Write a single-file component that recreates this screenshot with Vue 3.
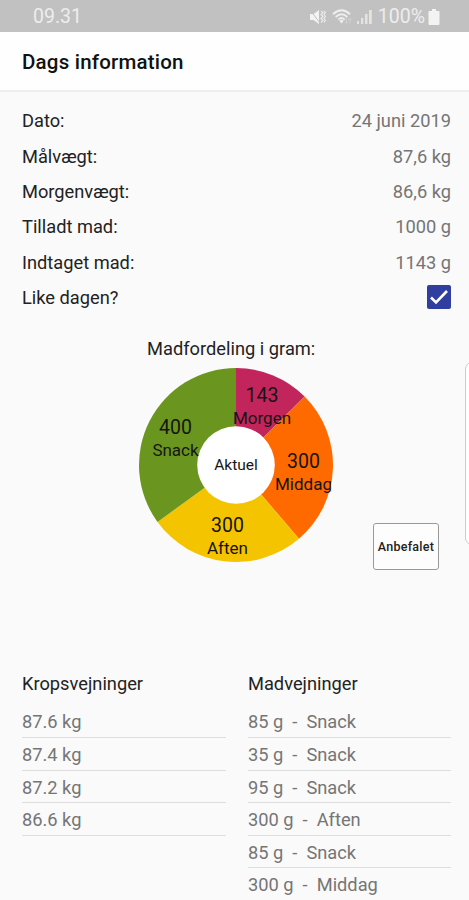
<script setup>
const info = [
  { label: 'Dato:', value: '24 juni 2019' },
  { label: 'Målvægt:', value: '87,6 kg' },
  { label: 'Morgenvægt:', value: '86,6 kg' },
  { label: 'Tilladt mad:', value: '1000 g' },
  { label: 'Indtaget mad:', value: '1143 g' },
]

const meals = [
  { name: 'Morgen', grams: 143, color: '#c2255c', x: 123, y: 34, ny: 56 },
  { name: 'Middag', grams: 300, color: '#ff6a00', x: 164.5, y: 99.5, ny: 121.5 },
  { name: 'Aften', grams: 300, color: '#f5c400', x: 88.5, y: 164, ny: 186 },
  { name: 'Snack', grams: 400, color: '#6a961f', x: 36.5, y: 66, ny: 88 },
]
const R = 97
const total = meals.reduce((sum, m) => sum + m.grams, 0)
const point = (g) => {
  const a = (g / total) * Math.PI * 2
  return `${(R + R * Math.sin(a)).toFixed(2)} ${(R - R * Math.cos(a)).toFixed(2)}`
}
let start = 0
const slices = meals.map((m) => {
  const d = `M${R} ${R}L${point(start)}A${R} ${R} 0 0 1 ${point(start + m.grams)}Z`
  start += m.grams
  return { ...m, d }
})

const body = ['87.6 kg', '87.4 kg', '87.2 kg', '86.6 kg']
const food = [
  '85 g  -  Snack',
  '35 g  -  Snack',
  '95 g  -  Snack',
  '300 g  -  Aften',
  '85 g  -  Snack',
  '300 g  -  Middag',
]
</script>

<template>
  <div class="screen">
    <header class="status">
      <span class="clock">09.31</span>
      <svg class="mute" width="17" height="16" viewBox="0 0 17 16">
        <path d="M1 5h3.500L10 1v14L4.500 11H1z" fill="#f3f3f3" />
        <path d="M1 1l10 13" stroke="#c1c1c1" stroke-width="1" />
        <path d="M12 2l2 1.500-2 2 2 2-2 2 2 2-2 2M15 2l1.500 1.500-1.500 2 1.500 2-1.500 2 1.500 2-1.500 2" fill="none" stroke="#ebebeb" stroke-width="1.200" />
      </svg>
      <svg class="wifi" width="21" height="16" viewBox="0 0 21 16">
        <g fill="none" stroke="#eeeeee" stroke-width="1.900">
          <path d="M1 5.200Q9.500-2.500 18 5.200" />
          <path d="M3.700 8Q9.500 2.500 15.300 8" />
          <path d="M6.300 10.600Q9.500 7.500 12.700 10.600" />
        </g>
        <path d="M7.200 11.700Q9.500 10 11.800 11.700L9.500 14.500z" fill="#eeeeee" />
        <path d="M14.500 9v5M13 12.500l1.500 2 1.500-2M18 14.500v-5M16.500 11l1.500-2 1.500 2" fill="none" stroke="#d0d0d0" stroke-width="1" />
      </svg>
      <svg class="signal" width="15" height="16" viewBox="0 0 15 16">
        <path d="M0 12h2v3H0zM4 9h2.300v6H4zM8 5h2.500v10H8zM12 1h2.800v14H12z" fill="#e3e3e3" />
      </svg>
      <span class="percent">100%</span>
      <svg class="battery" width="12" height="16" viewBox="0 0 12 16">
        <path d="M4 0h4v2h2.500q1 0 1 1v12q0 1-1 1h-9q-1 0-1-1V3q0-1 1-1H4z" fill="#f3f3f3" />
      </svg>
    </header>

    <div class="toolbar"><h1>Dags information</h1></div>

    <main>
      <section class="info">
        <div v-for="row in info" :key="row.label" class="row">
          <span>{{ row.label }}</span>
          <span class="value">{{ row.value }}</span>
        </div>
        <div class="row">
          <span>Like dagen?</span>
          <svg class="check" width="24" height="24" viewBox="0 0 24 24">
            <rect width="24" height="24" rx="2" fill="#303f9f" />
            <path d="M4 12.500l5 5L20 6" fill="none" stroke="#fff" stroke-width="2.600" />
          </svg>
        </div>
      </section>

      <h2 class="chart-title">Madfordeling i gram:</h2>
      <section class="chart-area">
        <svg class="chart" width="194" height="194" viewBox="0 0 194 194">
          <path v-for="s in slices" :key="s.name" :d="s.d" :fill="s.color" />
          <circle cx="97" cy="97" r="38.800" fill="#fff" />
          <g v-for="s in slices" :key="s.name" class="slice-label">
            <text class="grams" :x="s.x" :y="s.y">{{ s.grams }}</text>
            <text class="name" :x="s.x" :y="s.ny">{{ s.name }}</text>
          </g>
          <text class="center" x="97" y="102">Aktuel</text>
        </svg>
        <button class="recommend">Anbefalet</button>
      </section>

      <section class="lists">
        <div>
          <h3>Kropsvejninger</h3>
          <ul>
            <li v-for="(w, i) in body" :key="i">{{ w }}</li>
          </ul>
        </div>
        <div>
          <h3>Madvejninger</h3>
          <ul>
            <li v-for="(w, i) in food" :key="i">{{ w }}</li>
          </ul>
        </div>
      </section>
    </main>
    <div class="edge-handle"></div>
  </div>
</template>

<style>
body {
  background: #fafafa;
}
</style>

<style scoped>
.screen {
  position: relative;
  width: 469px;
  height: 900px;
  overflow: hidden;
  background: #fafafa;
  color: #222;
  font-family: Roboto, sans-serif;
  font-size: 18.250px;
}
h1, h2, h3, ul {
  margin: 0;
  padding: 0;
  font-weight: 400;
}
.status {
  display: flex;
  align-items: center;
  box-sizing: border-box;
  height: 32px;
  padding: 1px 29px 0 33px;
  background: #c1c1c1;
  color: #ededed;
}
.clock {
  margin-right: auto;
  font-size: 19.500px;
}
.wifi {
  margin-left: 6px;
}
.signal {
  margin-left: 4px;
}
.percent {
  margin: 0 3px 0 6px;
  font-size: 19.500px;
}
.toolbar {
  display: flex;
  align-items: center;
  box-sizing: border-box;
  height: 60px;
  padding: 2px 0 0 22px;
  background: #fefefe;
  border-bottom: 2px solid #eee;
}
h1 {
  color: #111;
  font-size: 20.500px;
  font-weight: 500;
  letter-spacing: 0.200px;
}
.info {
  padding: 11.200px 18px 0 22px;
}
.row {
  display: flex;
  align-items: center;
  justify-content: space-between;
  height: 35.300px;
}
.value {
  color: #757575;
}
.chart-title {
  height: 32px;
  margin-top: 21px;
  padding-left: 147px;
  font-size: 18.300px;
  line-height: 26px;
}
.chart-area {
  display: flex;
  align-items: flex-start;
  justify-content: space-between;
  height: 202px;
  padding: 0 30px 0 139px;
}
.slice-label, .center {
  fill: #151515;
  text-anchor: middle;
}
.grams {
  font-size: 19.500px;
}
.name {
  font-size: 17px;
}
.center {
  font-size: 15.500px;
}
.recommend {
  align-self: flex-end;
  box-sizing: border-box;
  width: 66px;
  height: 47px;
  padding: 0;
  background: #fdfdfd;
  border: 1.500px solid #999;
  border-radius: 3px;
  color: #222;
  font-family: inherit;
  font-size: 12.500px;
  font-weight: 500;
  letter-spacing: 0.250px;
  white-space: nowrap;
}
.lists {
  display: grid;
  grid-template-columns: 204px 203px;
  column-gap: 22px;
  padding: 101px 18px 0 22px;
}
h3 {
  height: 34.500px;
  font-size: 18.250px;
  line-height: 26px;
}
ul {
  list-style: none;
}
li {
  box-sizing: border-box;
  height: 32.600px;
  border-bottom: 1.500px solid #dedede;
  color: #757575;
  line-height: 33.500px;
  white-space: pre;
}
.edge-handle {
  position: absolute;
  top: 362px;
  right: -10px;
  box-sizing: border-box;
  width: 14px;
  height: 183px;
  background: #fff;
  border: 1px solid #ccc;
  border-radius: 7px;
}
</style>
